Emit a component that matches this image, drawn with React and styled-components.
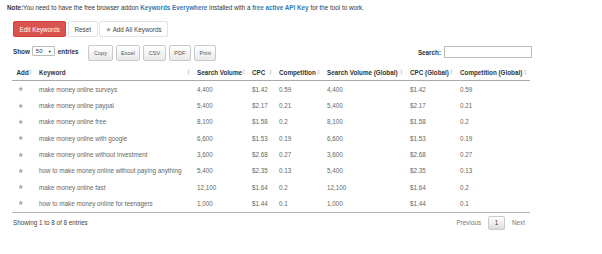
import React from "react";
import styled, { createGlobalStyle } from "styled-components";

const Global = createGlobalStyle`
  html, body { margin: 0; padding: 0; background: #fff; }
  body {
    font-family: "Liberation Sans", Arial, "Helvetica Neue", sans-serif;
    font-size: 6.3px;
    line-height: 9px;
    color: #333;
  }
  * { box-sizing: border-box; }
`;

const Page = styled.div`
  width: 602px;
  height: 254px;
  padding: 3px 7px 0 7px;
`;

const Note = styled.div`
  height: 9px;
  white-space: nowrap;
  b { font-weight: bold; }
`;

const Link = styled.a`
  color: #337ab7;
  font-weight: bold;
  text-decoration: none;
`;

const Content = styled.div`
  padding-left: 6px;
  width: 525px;
`;

const ActionBar = styled.div`
  display: flex;
  gap: 1.5px;
  margin-top: 9px;
`;

const Btn = styled.button`
  font-family: inherit;
  font-size: 6.3px;
  line-height: 9px;
  height: 16px;
  padding: 0 5.6px;
  border-radius: 2px;
  display: flex;
  align-items: center;
  gap: 2px;
  cursor: pointer;
  border: 1px solid ${(p) => (p.$danger ? "#d43f3a" : "#e3e3e3")};
  background: ${(p) => (p.$danger ? "#d9534f" : "#fff")};
  color: ${(p) => (p.$danger ? "#fff" : "#444")};
`;

const Controls = styled.div`
  display: flex;
  align-items: flex-start;
  margin-top: 8px;
  height: 16px;
`;

const Length = styled.label`
  display: flex;
  align-items: center;
  gap: 2px;
  font-weight: bold;
  height: 11px;
  margin-top: 0.5px;
`;

const FakeSelect = styled.span`
  display: inline-flex;
  align-items: center;
  justify-content: space-between;
  width: 23px;
  height: 10px;
  padding: 0 2px 0 3px;
  border: 1px solid #bbb;
  border-radius: 1px;
  font-weight: normal;
  font-size: 6px;
  background: #fff;
  margin-right: 1px;
`;

const Caret = styled.span`
  font-size: 4px;
`;

const DtButtons = styled.div`
  display: flex;
  gap: 3px;
  margin-left: 10px;
`;

const DtButton = styled.button`
  font-family: inherit;
  font-size: 5.6px;
  height: 16px;
  padding: 0 4.5px;
  border: 1px solid #c9c9c9;
  border-radius: 2px;
  background: linear-gradient(to bottom, #ffffff 0%, #e9e9e9 100%);
  color: #555;
  display: flex;
  align-items: center;
`;

const Spacer = styled.div`
  flex: 1;
`;

const Filter = styled.label`
  display: flex;
  align-items: center;
  gap: 3px;
  font-weight: bold;
  margin-top: 1px;
`;

const SearchInput = styled.span`
  display: inline-block;
  width: 88px;
  height: 12px;
  border: 1px solid #b8b8b8;
  background: #fff;
`;

const Table = styled.table`
  margin-top: 3px;
  margin-left: -1px;
  width: 517.5px;
  table-layout: fixed;
  border-collapse: collapse;
  border-bottom: 1px solid #b5b5b5;
`;

const Th = styled.th`
  position: relative;
  text-align: left;
  font-weight: bold;
  white-space: nowrap;
  padding: 3.6px 4.5px;
  height: 16.2px;
  border-bottom: 1px solid #a9a9a9;
  color: #333;
`;

const SortIcon = styled.svg`
  position: absolute;
  right: 3px;
  top: 5px;
  width: 3px;
  height: 6px;
`;

const Td = styled.td`
  padding: 3.65px 4.5px;
  height: 16.3px;
  color: #666;
  white-space: nowrap;
`;

const StarCell = styled(Td)`
  padding-left: 6px;
`;

const Footer = styled.div`
  display: flex;
  align-items: center;
  justify-content: space-between;
  width: 517px;
  margin-top: 3px;
`;

const Info = styled.div`
  color: #444;
  margin-top: -1px;
`;

const Pager = styled.div`
  display: flex;
  align-items: center;
  gap: 7px;
  margin-right: 5px;
`;

const PageLink = styled.span`
  color: #777;
`;

const PageCurrent = styled.span`
  display: flex;
  align-items: center;
  justify-content: center;
  width: 17px;
  height: 14px;
  border: 1px solid #cacaca;
  border-radius: 2px;
  background: linear-gradient(to bottom, #ffffff 0%, #dcdcdc 100%);
  color: #444;
`;

const Star = ({ size = 5.5, color = "#aaa" }) => (
  <svg width={size} height={size} viewBox="0 0 24 24">
    <path
      fill={color}
      d="M12 1.5l3.1 7.1 7.7.7-5.8 5.1 1.7 7.6L12 18l-6.7 4 1.7-7.6-5.8-5.1 7.7-.7z"
    />
  </svg>
);

const Sort = () => (
  <SortIcon viewBox="0 0 3 6">
    <path d="M1.5 0L3 2.4H0z M1.5 6L3 3.6H0z" fill="#d6d6d6" />
  </SortIcon>
);

const columns = [
  { label: "Add", w: 22.5 },
  { label: "Keyword", w: 158 },
  { label: "Search Volume", w: 55 },
  { label: "CPC", w: 27 },
  { label: "Competition", w: 48 },
  { label: "Search Volume (Global)", w: 83 },
  { label: "CPC (Global)", w: 50 },
  { label: "Competition (Global)", w: 74 },
];

const rows = [
  ["make money online surveys", "4,400", "$1.42", "0.59"],
  ["make money online paypal", "5,400", "$2.17", "0.21"],
  ["make money online free", "8,100", "$1.58", "0.2"],
  ["make money online with google", "6,600", "$1.53", "0.19"],
  ["make money online without investment", "3,600", "$2.68", "0.27"],
  ["how to make money online without paying anything", "5,400", "$2.35", "0.13"],
  ["make money online fast", "12,100", "$1.64", "0.2"],
  ["how to make money online for teenagers", "1,000", "$1.44", "0.1"],
];

export default function App() {
  return (
    <>
      <Global />
      <Page>
        <Note>
          <b>Note:</b>You need to have the free browser addon{" "}
          <Link>Keywords Everywhere</Link> installed with a{" "}
          <Link>free active API Key</Link> for the tool to work.
        </Note>
        <Content>
          <ActionBar>
            <Btn $danger>Edit Keywords</Btn>
            <Btn>Reset</Btn>
            <Btn>
              <Star size={5} color="#999" />
              Add All Keywords
            </Btn>
          </ActionBar>
          <Controls>
            <Length>
              Show
              <FakeSelect>
                50 <Caret>▼</Caret>
              </FakeSelect>
              entries
            </Length>
            <DtButtons>
              <DtButton>Copy</DtButton>
              <DtButton>Excel</DtButton>
              <DtButton>CSV</DtButton>
              <DtButton>PDF</DtButton>
              <DtButton>Print</DtButton>
            </DtButtons>
            <Spacer />
            <Filter>
              Search:
              <SearchInput />
            </Filter>
          </Controls>
          <Table>
            <colgroup>
              {columns.map((c) => (
                <col key={c.label} style={{ width: c.w }} />
              ))}
            </colgroup>
            <thead>
              <tr>
                {columns.map((c) => (
                  <Th key={c.label}>
                    {c.label}
                    <Sort />
                  </Th>
                ))}
              </tr>
            </thead>
            <tbody>
              {rows.map((r) => (
                <tr key={r[0]}>
                  <StarCell>
                    <Star />
                  </StarCell>
                  <Td>{r[0]}</Td>
                  <Td>{r[1]}</Td>
                  <Td>{r[2]}</Td>
                  <Td>{r[3]}</Td>
                  <Td>{r[1]}</Td>
                  <Td>{r[2]}</Td>
                  <Td>{r[3]}</Td>
                </tr>
              ))}
            </tbody>
          </Table>
          <Footer>
            <Info>Showing 1 to 8 of 8 entries</Info>
            <Pager>
              <PageLink>Previous</PageLink>
              <PageCurrent>1</PageCurrent>
              <PageLink>Next</PageLink>
            </Pager>
          </Footer>
        </Content>
      </Page>
    </>
  );
}
